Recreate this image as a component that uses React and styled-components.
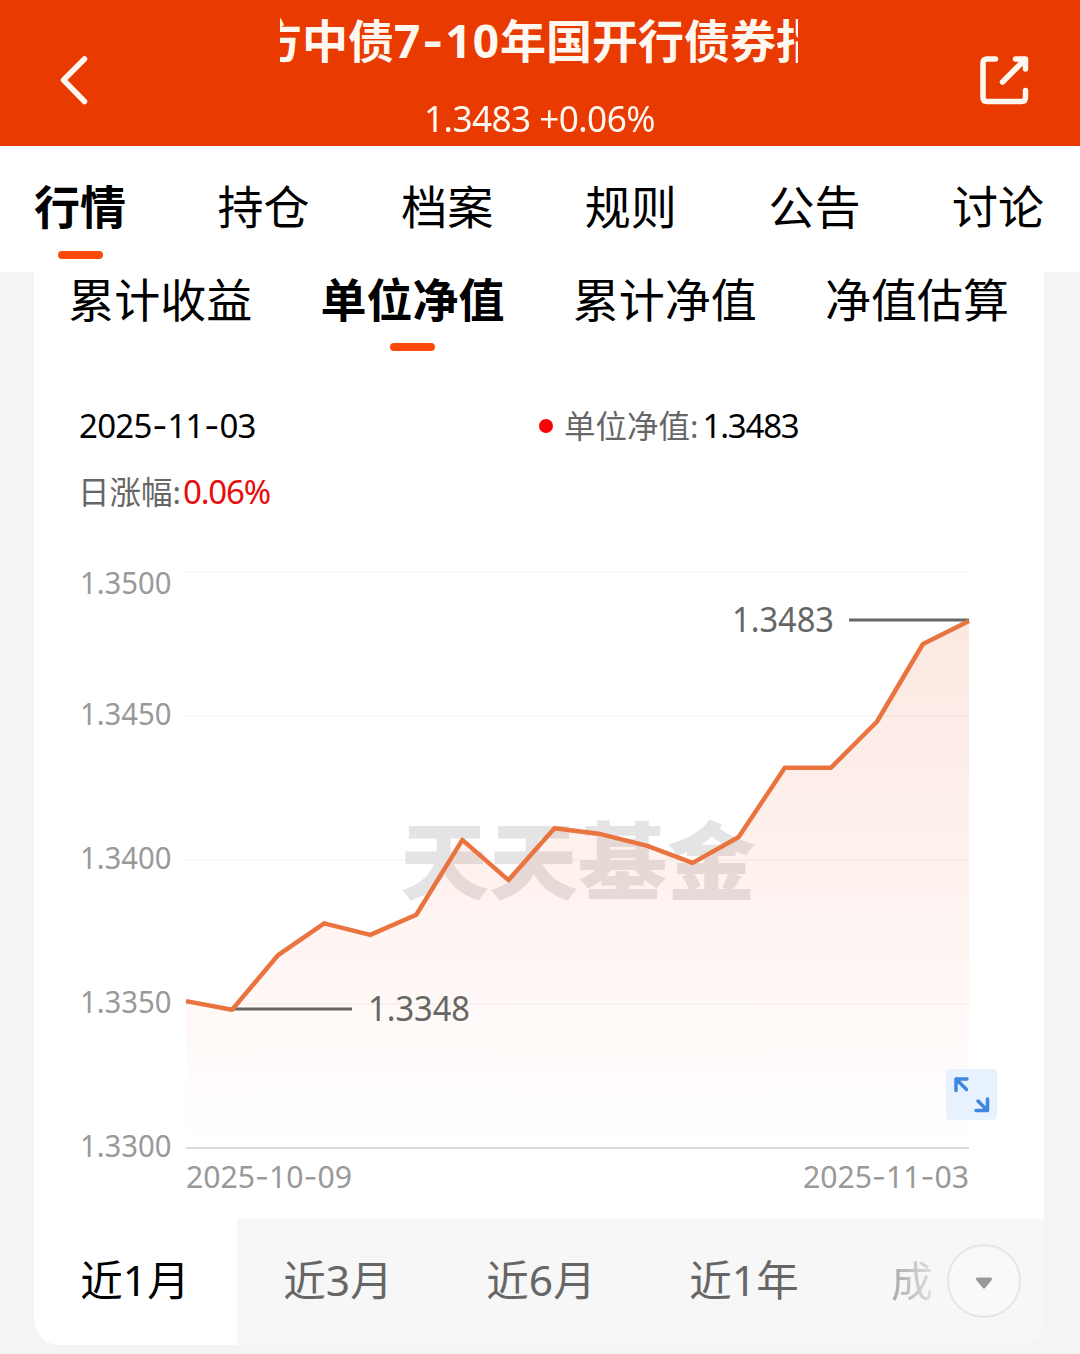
import styled, { createGlobalStyle, css } from "styled-components";

const GlobalStyle = createGlobalStyle`
    * {
        box-sizing: border-box;
    }
    body {
        margin: 0;
        background: #f4f4f4;
        font-family: "Noto Sans", "Noto Sans CJK SC", sans-serif;
        color: #000;
    }
    button {
        border: 0;
        padding: 0;
        background: none;
        font: inherit;
        color: inherit;
    }
`;

const Page = styled.main`
    width: 1080px;
    height: 1354px;
    overflow: hidden;
`;

const Header = styled.header`
    display: grid;
    grid-template-columns: 280px 518px 282px;
    grid-template-rows: 146px;
    background: #e93a02;
    color: #fff8f0;
`;

const HeaderSide = styled.div`
    display: flex;
    align-items: center;
    justify-content: ${({ $end }) => ($end ? "flex-end" : "flex-start")};
    padding: 14px 48px 0 56px;
`;

const HeaderCenter = styled.div`
    display: flex;
    flex-direction: column;
    align-items: center;
    padding-top: 7px;
`;

const Marquee = styled.h1`
    flex: none;
    width: 100%;
    margin: 0;
    overflow: hidden;
    white-space: nowrap;
    text-indent: -24px;
    font-size: 46px;
    line-height: 66px;
    font-weight: 700;
`;

const Digits = styled.span`
    letter-spacing: 1.1px;
`;

const Quote = styled.p`
    margin: 18px 0 0;
    font-size: 37px;
    line-height: 52px;
    letter-spacing: -0.6px;
    white-space: nowrap;
    transform: scaleX(0.95);
`;

const Dash = styled.span`
    font-family: Inter, sans-serif;
    margin: 0 0.6px;
`;

const TabBar = styled.nav`
    display: flex;
    justify-content: space-between;
    height: 126px;
    padding: 0 36px 0 34px;
    background: #fff;
`;

const SubTabBar = styled.nav`
    display: grid;
    grid-template-columns: repeat(4, 1fr);
    height: 92px;
    padding-right: 1px;
`;

const Tab = styled.button`
    display: flex;
    flex-direction: column;
    align-items: center;
    justify-content: flex-end;
    padding-bottom: 13px;
    font-size: 46px;
    line-height: 66px;
    white-space: nowrap;

    ${({ $active }) =>
        $active &&
        css`
            font-weight: 700;
        `}

    &::after {
        content: "";
        flex: none;
        width: 45px;
        height: 8px;
        margin-top: 12px;
        border-radius: 4px;
        background: ${({ $active }) => ($active ? "#fb4a08" : "transparent")};
    }

    ${SubTabBar} & {
        line-height: 54px;
    }

    ${SubTabBar} &::after {
        margin-top: 17px;
    }
`;

const Card = styled.section`
    width: 1010px;
    height: 1073px;
    margin: 0 auto 0 34px;
    overflow: hidden;
    border-radius: 0 0 26px 26px;
    background: #fff;
`;

const Info = styled.div`
    display: grid;
    grid-template-columns: 460px 1fr;
    grid-auto-rows: 66px;
    align-items: center;
    padding: 29px 45px 0;
    font-size: 32px;
    line-height: 48px;
`;

const InfoItem = styled.div`
    display: flex;
    align-items: center;
    white-space: nowrap;
`;

const Label = styled.span`
    margin-left: -1px;
    font-size: 31.5px;
    color: #666;
`;

const Value = styled.span`
    font-size: 33px;
    letter-spacing: ${({ $tight }) => ($tight ? "-1.2px" : "-0.7px")};
    margin-left: ${({ $gap }) => $gap || 0}px;
    color: ${({ $up }) => ($up ? "#e60d0d" : "#000")};
`;

const Dot = styled.i`
    width: 14px;
    height: 14px;
    margin-right: 12px;
    border-radius: 50%;
    background: #fb0007;
`;

const ChartBox = styled.div`
    position: relative;
    height: 693px;

    svg {
        display: block;
    }
`;

const ExpandButton = styled.button`
    position: absolute;
    left: 912px;
    top: 544px;
    width: 51px;
    height: 51px;
    border-radius: 4px;
    background: #e8f1fe;
`;

const RangeBar = styled.div`
    display: flex;
    height: 127px;
    background: #f7f7f7;
`;

const Range = styled.button`
    flex: 0 0 203px;
    padding: 0 1px 3px 0;
    font-size: 42.5px;
    line-height: 124px;
    white-space: nowrap;
    color: ${({ $active }) => ($active ? "#000" : "#666")};
    background: ${({ $active }) => ($active ? "#fff" : "transparent")};
`;

const More = styled.div`
    display: flex;
    align-items: center;
    padding: 0 0 2px 45px;
    gap: 14px;
`;

const Faded = styled.span`
    font-size: 42px;
    line-height: 124px;
    color: transparent;
    background: linear-gradient(90deg, #a8a8a8, #e0e0e0);
    background-clip: text;
`;

const MoreButton = styled.button`
    display: flex;
    align-items: center;
    justify-content: center;
    width: 74px;
    height: 74px;
    padding-top: 4px;
    border: 2px solid #e6e6e6;
    border-radius: 50%;
    background: #f9f9f9;
`;

const tabs = ["行情", "持仓", "档案", "规则", "公告", "讨论"];
const subTabs = ["累计收益", "单位净值", "累计净值", "净值估算"];
const ranges = ["近1月", "近3月", "近6月", "近1年"];

const netValues = [
    1.3351, 1.3348, 1.3367, 1.3378, 1.3374, 1.3381, 1.3407, 1.3393, 1.3411,
    1.3409, 1.3405, 1.3399, 1.3408, 1.3432, 1.3432, 1.3448, 1.3475, 1.3483,
];

// 图表区域
const LEFT = 152;
const RIGHT = 935;
const TOP = 47;
const BOTTOM = 623;

const toX = (i) => LEFT + (i * (RIGHT - LEFT)) / (netValues.length - 1);
const toY = (v) => BOTTOM - ((v - 1.33) / 0.02) * (BOTTOM - TOP);

const axis = [
    { value: 1.35, labelY: 69 },
    { value: 1.345, labelY: 200 },
    { value: 1.34, labelY: 344 },
    { value: 1.335, labelY: 488 },
    { value: 1.33, labelY: 632 },
];

function DateText({ value }) {
    return value.split("-").map((part, i) => (
        <span key={i}>
            {i > 0 && <Dash>-</Dash>}
            {part}
        </span>
    ));
}

function SvgDate({ value, x, y }) {
    return (
        <text x={x} y={y} fill="#999" fontSize="31" textLength="166" lengthAdjust="spacingAndGlyphs">
            {value.split("-").map((part, i) => (
                <tspan key={i}>
                    {i > 0 && <tspan fontFamily="Inter, sans-serif">-</tspan>}
                    {part}
                </tspan>
            ))}
        </text>
    );
}

function Chart() {
    const points = netValues.map((v, i) => `${toX(i)},${toY(v)}`);
    return (
        <svg width="1010" height="693" viewBox="0 0 1010 693">
            <defs>
                <linearGradient id="area" x1="0" y1="96" x2="0" y2="623" gradientUnits="userSpaceOnUse">
                    <stop offset="0" stopColor="#e8643c" stopOpacity="0.15" />
                    <stop offset="0.5" stopColor="#f4623c" stopOpacity="0.08" />
                    <stop offset="1" stopColor="#f4623c" stopOpacity="0" />
                </linearGradient>
            </defs>
            {axis.map(({ value, labelY }) => (
                <g key={value}>
                    <line
                        x1={LEFT}
                        x2={RIGHT}
                        y1={toY(value)}
                        y2={toY(value)}
                        stroke={value === 1.33 ? "#dadada" : "#f8f8f8"}
                        strokeWidth="2"
                    />
                    <text x="46" y={labelY} fill="#999" fontSize="31" textLength="91.5" lengthAdjust="spacingAndGlyphs">
                        {value.toFixed(4)}
                    </text>
                </g>
            ))}
            <text
                x="366"
                y="368"
                fontSize="84"
                fontWeight="900"
                fill="#e4e4e4"
                textLength="356"
                lengthAdjust="spacingAndGlyphs"
            >
                天天基金
            </text>
            <polygon points={`${LEFT},${BOTTOM} ${points.join(" ")} ${RIGHT},${BOTTOM}`} fill="url(#area)" />
            <line x1="815" x2={RIGHT} y1="95" y2="95" stroke="#666" strokeWidth="3" />
            <line x1={toX(1)} x2="318" y1="484" y2="484" stroke="#666" strokeWidth="3" />
            <polyline points={points.join(" ")} fill="none" stroke="#e9743f" strokeWidth="4.500" strokeLinejoin="round" />
            <text x="698" y="107" fill="#666" fontSize="34" textLength="102" lengthAdjust="spacingAndGlyphs">
                1.3483
            </text>
            <text x="334" y="496" fill="#666" fontSize="34" textLength="102" lengthAdjust="spacingAndGlyphs">
                1.3348
            </text>
            <SvgDate value="2025-10-09" x="152" y="663" />
            <SvgDate value="2025-11-03" x="769" y="663" />
        </svg>
    );
}

export default function App() {
    return (
        <Page>
            <GlobalStyle />
            <Header>
                <HeaderSide>
                    <svg width="36" height="52" viewBox="56 54 36 52" fill="none" stroke="currentColor" strokeWidth="5.500" strokeLinecap="round" strokeLinejoin="round">
                        <path d="M84.500 59 63.500 80l21 21.500" />
                    </svg>
                </HeaderSide>
                <HeaderCenter>
                    <Marquee>
                        方中债
                        <Digits>
                            7<Dash>-</Dash>10
                        </Digits>
                        年国开行债券指
                    </Marquee>
                    <Quote>1.3483 +0.06%</Quote>
                </HeaderCenter>
                <HeaderSide $end>
                    <svg width="56" height="56" viewBox="976 52 56 56" fill="none" stroke="currentColor" strokeWidth="5.500" strokeLinecap="round" strokeLinejoin="round">
                        <path d="M995.500 59h-8.500q-4 0-4 4v34.500q0 4 4 4h34.500q4 0 4-4v-7" />
                        <path d="M1015.500 59h10v10M1024 60.500 1002.500 82" />
                    </svg>
                </HeaderSide>
            </Header>

            <TabBar>
                {tabs.map((name) => (
                    <Tab key={name} $active={name === "行情"}>
                        {name}
                    </Tab>
                ))}
            </TabBar>

            <Card>
                <SubTabBar>
                    {subTabs.map((name) => (
                        <Tab key={name} $active={name === "单位净值"}>
                            {name}
                        </Tab>
                    ))}
                </SubTabBar>

                <Info>
                    <InfoItem>
                        <Value>
                            <DateText value="2025-11-03" />
                        </Value>
                    </InfoItem>
                    <InfoItem>
                        <Dot />
                        <Label>单位净值:</Label>
                        <Value $gap={4} $tight>1.3483</Value>
                    </InfoItem>
                    <InfoItem>
                        <Label>日涨幅:</Label>
                        <Value $gap={2} $up $tight>0.06%</Value>
                    </InfoItem>
                </Info>

                <ChartBox>
                    <Chart />
                    <ExpandButton aria-label="全屏">
                        <svg width="51" height="51" viewBox="0 0 51 51" fill="none" stroke="#3c87e0" strokeWidth="3.500" strokeLinecap="round" strokeLinejoin="round">
                            <path d="M21 10H10v11.500M11 11l9.500 9.500" />
                            <path d="M30 41.500h11.500V30M40.500 40.500 32 32" />
                        </svg>
                    </ExpandButton>
                </ChartBox>

                <RangeBar>
                    {ranges.map((name) => (
                        <Range key={name} $active={name === "近1月"}>
                            {name}
                        </Range>
                    ))}
                    <More>
                        <Faded>成</Faded>
                        <MoreButton aria-label="更多">
                            <svg width="18" height="12" viewBox="0 0 18 12">
                                <path d="M2.500 2h13L9 10z" fill="#999" stroke="#999" strokeWidth="3" strokeLinejoin="round" />
                            </svg>
                        </MoreButton>
                    </More>
                </RangeBar>
            </Card>
        </Page>
    );
}
